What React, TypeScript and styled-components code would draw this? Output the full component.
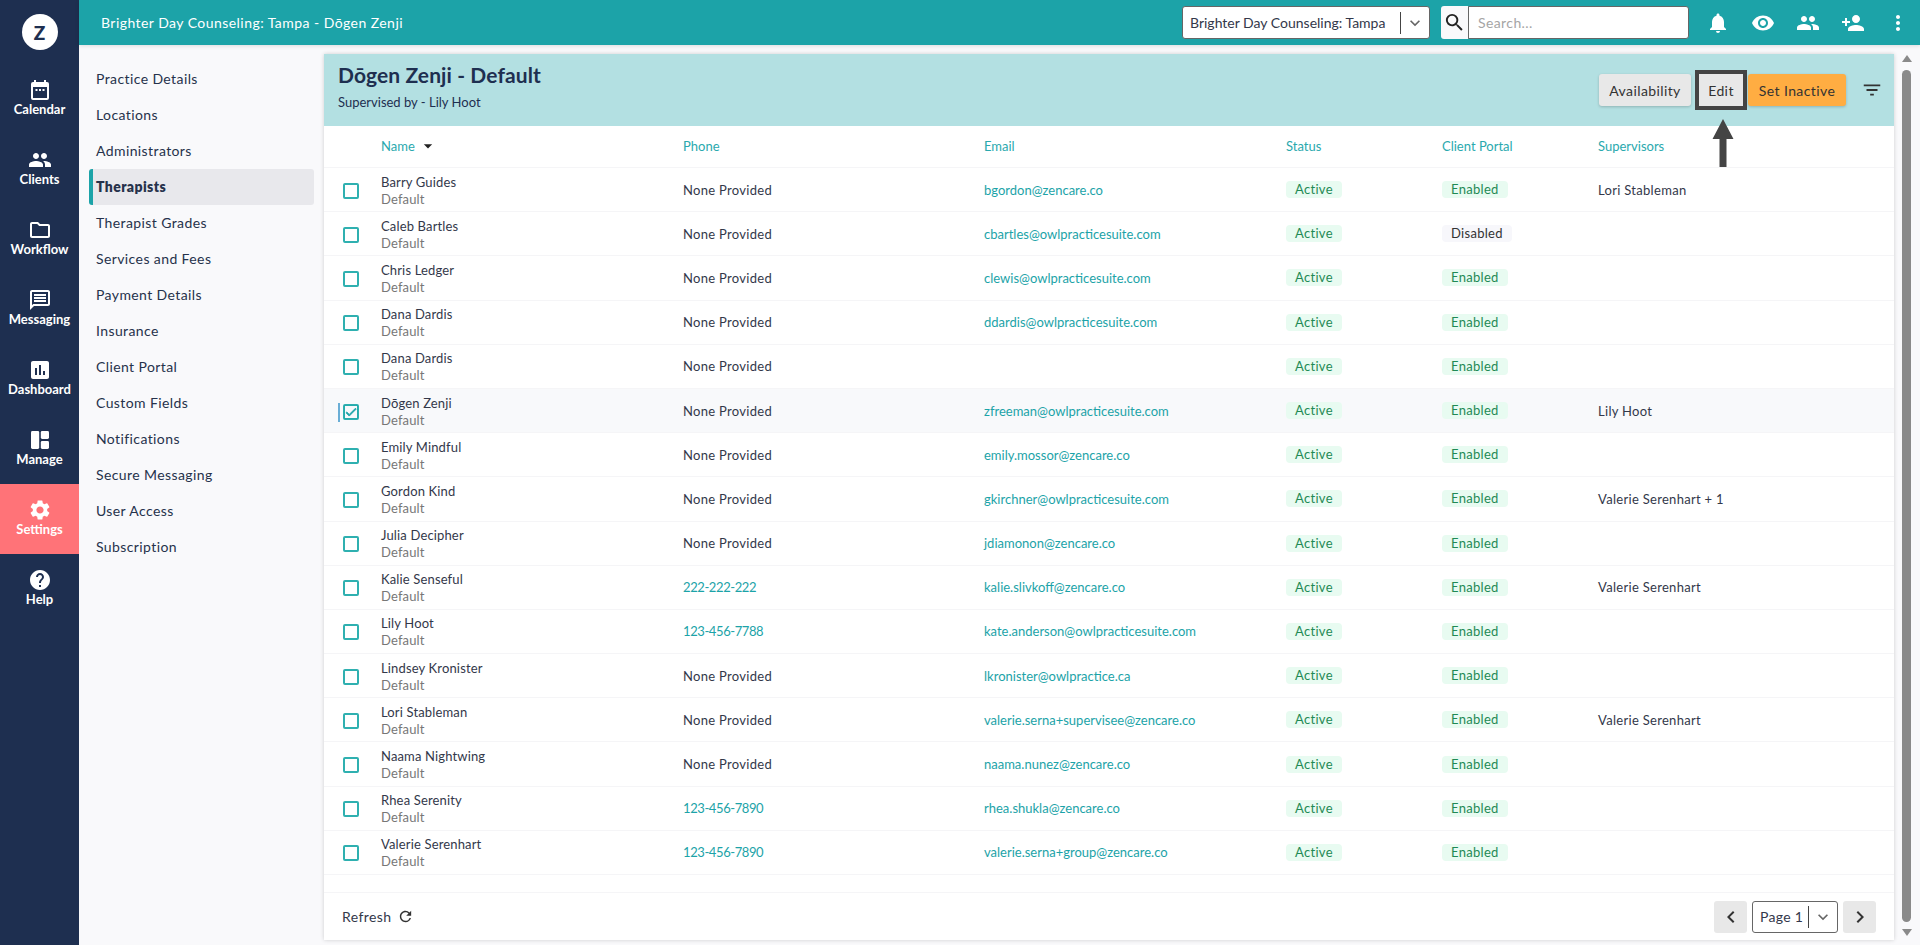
import React from "react";
import styled, { createGlobalStyle } from "styled-components";
import {
  MdPeople, MdOutlineFolder, MdOutlineMessage, MdAssessment, MdSettings, MdHelp,
  MdNotifications, MdVisibility, MdPersonAdd, MdMoreVert, MdSearch, MdFilterList,
  MdRefresh, MdChevronLeft, MdChevronRight, MdKeyboardArrowDown, MdArrowDropDown, MdCheck,
} from "react-icons/md";

const FONT = `"Lato", "Noto Sans", Arial, sans-serif`;

const Global = createGlobalStyle`
  html, body { margin: 0; padding: 0; height: 100%; overflow: hidden; background: #f9f9fb; }
  #root { height: 100%; }
  * { box-sizing: border-box; }
  body { font-family: ${FONT}; font-size: 14px; color: #33384a; }
`;

const Shell = styled.div`
  display: grid;
  grid-template-columns: 79px 1fr;
  height: 945px;
  width: 1920px;
`;

const Rail = styled.nav`
  background: #1e2f50;
  display: flex;
  flex-direction: column;
`;

const LogoBlock = styled.div`
  height: 64px;
  display: flex;
  justify-content: center;
  padding-top: 14px;
`;

const LogoCircle = styled.div`
  width: 36px;
  height: 36px;
  border-radius: 50%;
  background: #fff;
  color: #1e2f50;
  font-weight: 900;
  font-size: 19px;
  display: flex;
  align-items: center;
  justify-content: center;
`;

const RailItem = styled.div<{ $active?: boolean }>`
  height: 70px;
  background: ${(p) => (p.$active ? "#ff7378" : "transparent")};
  color: #fff;
  display: flex;
  flex-direction: column;
  align-items: center;
  padding-top: 14px;
  font-size: 13px;
  font-weight: 700;
  line-height: 18px;
  svg { display: block; width: 24px; height: 24px; margin-bottom: -2px; }
`;

const Main = styled.div`
  display: flex;
  flex-direction: column;
  min-width: 0;
`;

const TopBar = styled.header`
  height: 45px;
  flex: none;
  background: #1ca3a8;
  display: flex;
  align-items: center;
  padding-left: 22px;
  color: #fff;
  box-shadow: 0 1px 4px rgba(0, 0, 0, 0.12);
  position: relative;
  z-index: 2;
`;

const TopTitle = styled.div`
  font-size: 14px;
  letter-spacing: 0.45px;
  flex: 1;
`;

const PracticeSelect = styled.div`
  width: 248px;
  height: 33px;
  background: #fff;
  border: 1px solid #666;
  border-radius: 3px;
  color: #33384a;
  display: flex;
  align-items: center;
  padding-left: 7px;
  font-size: 14px;
  white-space: nowrap;
  margin-right: 11px;
`;

const SelectLabel = styled.span`
  flex: 1;
`;

const SelectCaret = styled.span`
  height: 22px;
  border-left: 1px solid #444;
  width: 29px;
  flex: none;
  display: flex;
  align-items: center;
  justify-content: center;
  color: #666;
  font-size: 20px;
`;

const SearchButton = styled.div`
  width: 27px;
  height: 33px;
  background: #f9f9fb;
  border-radius: 3px 0 0 3px;
  color: #222;
  display: flex;
  align-items: center;
  justify-content: center;
  font-size: 23px;
`;

const SearchInput = styled.input`
  width: 221px;
  height: 33px;
  border: 1px solid #666;
  border-radius: 0 3px 3px 0;
  background: #fff;
  padding: 0 9px;
  font: 14px ${FONT};
  letter-spacing: 0.4px;
  outline: none;
  margin-right: 6px;
  &::placeholder { color: #a5a5a5; opacity: 1; }
`;

const TopIcon = styled.div`
  width: 45px;
  height: 45px;
  display: flex;
  align-items: center;
  justify-content: center;
  font-size: 24px;
  color: #fff;
`;

const Body = styled.div`
  flex: 1;
  display: flex;
  min-height: 0;
`;

const SubNav = styled.aside`
  width: 245px;
  flex: none;
  padding: 16px 10px 0 10px;
`;

const SubNavItem = styled.div<{ $active?: boolean }>`
  height: 36px;
  display: flex;
  align-items: center;
  padding: 0 0 2px ${(p) => (p.$active ? "3px" : "7px")};
  border-left: ${(p) => (p.$active ? "4px solid #1ca3a8" : "0")};
  border-radius: 3px;
  background: ${(p) => (p.$active ? "#e8e8ec" : "transparent")};
  font-weight: ${(p) => (p.$active ? 800 : 400)};
  font-size: 14px;
  letter-spacing: 0.4px;
  color: #26324b;
`;

const Panel = styled.section`
  width: 1570px;
  flex: none;
  margin: 9px 0 5px;
  background: #fff;
  display: flex;
  flex-direction: column;
  box-shadow: 0 0 4px rgba(0, 0, 0, 0.18);
`;

const PanelHead = styled.div`
  height: 72px;
  flex: none;
  background: #b3e0e2;
  display: flex;
  align-items: center;
  padding: 0 14px;
  position: relative;
`;

const HeadText = styled.div`
  flex: 1;
  display: flex;
  flex-direction: column;
  color: #1e2f50;
  padding-bottom: 7px;
`;

const Title = styled.h1`
  margin: -1px 0 6px;
  font-size: 21px;
  line-height: 26px;
  font-weight: 700;
  letter-spacing: 0.1px;
`;

const Sub = styled.div`
  font-size: 13px;
  line-height: 16px;
  letter-spacing: 0;
`;

const ActionButton = styled.div<{ $tone?: "grey" | "orange"; $ringed?: boolean; $width: number }>`
  height: 32px;
  width: ${(p) => p.$width}px;
  display: flex;
  align-items: center;
  justify-content: center;
  font-size: 14px;
  letter-spacing: 0.4px;
  color: #333;
  border-radius: ${(p) => (p.$ringed ? "0" : "3px")};
  background: ${(p) => (p.$tone === "orange" ? "#ffad42" : "#e8e8e8")};
  box-shadow: ${(p) => (p.$ringed ? "none" : "0 1px 3px rgba(0,0,0,.2)")};
  outline: ${(p) => (p.$ringed ? "4px solid #444" : "none")};
  margin-left: ${(p) => (p.$ringed ? "8px" : p.$tone === "orange" ? "5px" : "0")};
`;

const FilterIcon = styled.div`
  margin-left: 15px;
  margin-right: -3px;
  color: #333;
  font-size: 22px;
  display: flex;
`;

const Arrow = styled.svg`
  position: absolute;
  left: 1388px;
  top: 65px;
  z-index: 3;
`;

const Columns = styled.div`
  display: grid;
  grid-template-columns: 57px 302px 301px 302px 156px 156px 1fr;
  align-items: center;
`;

const HeadRow = styled(Columns)`
  height: 42px;
  flex: none;
  padding-bottom: 1px;
  border-bottom: 1px solid #f5f5f7;
  color: #2aa9ae;
  font-size: 13px;
  letter-spacing: 0;
`;

const SortCell = styled.div`
  display: flex;
  align-items: center;
  gap: 3px;
  svg { color: #222; font-size: 20px; }
`;

const Row = styled(Columns)<{ $selected?: boolean }>`
  height: 44.19px;
  flex: none;
  border-bottom: 1px solid #f5f5f7;
  background: ${(p) => (p.$selected ? "#f8f9fb" : "#fff")};
  font-size: 13px;
  letter-spacing: 0.3px;
  color: #33384a;
`;

const Check = styled.div<{ $on?: boolean }>`
  width: 16px;
  height: 16px;
  margin: 2px 0 0 19px;
  border: 2px solid #2fb0b0;
  border-radius: 2px;
  position: relative;
  color: #1ca3a8;
  display: flex;
  align-items: center;
  justify-content: center;
  font-size: 14px;
  svg { stroke: currentColor; stroke-width: 1.5; flex: none; }
  &::before {
    content: "";
    display: ${(p) => (p.$on ? "block" : "none")};
    position: absolute;
    left: -7px;
    top: -3px;
    width: 2px;
    height: 19px;
    background: #6aaed6;
  }
`;

const NameCell = styled.div`
  display: flex;
  flex-direction: column;
  line-height: 17px;
  margin-top: 2px;
  letter-spacing: 0.15px;
`;

const Sublabel = styled.span`
  color: #777;
`;

const EmailLink = styled.span`
  color: #1ca3a8;
  letter-spacing: 0;
`;

const PhoneLink = styled.span`
  color: #1ca3a8;
  letter-spacing: -0.4px;
`;

const Badge = styled.span<{ $off?: boolean }>`
  display: inline-block;
  padding: 0 9px;
  height: 17px;
  line-height: 17px;
  border-radius: 4px;
  background: ${(p) => (p.$off ? "#f7f7fb" : "#e8fbf1")};
  color: ${(p) => (p.$off ? "#333" : "#1f8a55")};
`;

const Spacer = styled.div`
  height: 18px;
  flex: none;
  border-bottom: 1px solid #f5f5f7;
`;

const Footer = styled.div`
  flex: 1;
  display: flex;
  align-items: center;
  padding: 0 18px 0 18px;
`;

const RefreshLabel = styled.div`
  flex: 1;
  display: flex;
  align-items: center;
  gap: 6px;
  font-size: 14px;
  letter-spacing: 0.4px;
  color: #33384a;
  svg { font-size: 17px; color: #333; }
`;

const PageNav = styled.div`
  width: 33px;
  height: 32px;
  border-radius: 3px;
  background: #e8e8e8;
  color: #333;
  display: flex;
  align-items: center;
  justify-content: center;
  font-size: 24px;
`;

const PageSelect = styled.div`
  width: 86px;
  height: 32px;
  margin: 0 5px;
  border: 1px solid #666;
  border-radius: 3px;
  display: flex;
  align-items: center;
  padding-left: 7px;
  font-size: 14px;
  letter-spacing: 0.3px;
  color: #33384a;
`;

const Scroller = styled.div`
  flex: 1;
  display: flex;
  flex-direction: column;
  align-items: center;
  padding: 10px 0 9px 0;
  margin-left: -1px;
`;

const ScrollUp = styled.div`
  border-left: 5px solid transparent;
  border-right: 5px solid transparent;
  border-bottom: 7px solid #8a8a8a;
  margin-bottom: 8px;
`;

const ScrollThumb = styled.div`
  width: 9px;
  flex: 1;
  background: #8a8a8a;
  border-radius: 5px;
`;

const ScrollDown = styled.div`
  border-left: 5px solid transparent;
  border-right: 5px solid transparent;
  border-top: 7px solid #8a8a8a;
  margin-top: 7px;
`;

const CalendarIcon = () => (
  <svg viewBox="0 0 24 24" fill="currentColor">
    <path d="M19 4h-1V2h-2v2H8V2H6v2H5a2 2 0 0 0-2 2v14a2 2 0 0 0 2 2h14a2 2 0 0 0 2-2V6a2 2 0 0 0-2-2zm0 16H5V9h14v11z" />
    <rect x="7.5" y="11" width="2" height="2" />
    <rect x="11" y="11" width="2" height="2" />
    <rect x="14.5" y="11" width="2" height="2" />
  </svg>
);

const ManageIcon = () => (
  <svg viewBox="0 0 24 24" fill="currentColor">
    <rect x="3" y="3" width="8.2" height="18" rx="1.4" />
    <rect x="12.8" y="3" width="8.2" height="8" rx="1.4" />
    <rect x="12.8" y="13" width="8.2" height="8" rx="1.4" />
  </svg>
);

const railItems: { label: string; icon: React.ReactNode; active?: boolean }[] = [
  { label: "Calendar", icon: <CalendarIcon /> },
  { label: "Clients", icon: <MdPeople /> },
  { label: "Workflow", icon: <MdOutlineFolder /> },
  { label: "Messaging", icon: <MdOutlineMessage /> },
  { label: "Dashboard", icon: <MdAssessment /> },
  { label: "Manage", icon: <ManageIcon /> },
  { label: "Settings", icon: <MdSettings />, active: true },
  { label: "Help", icon: <MdHelp /> },
];

const subNav = [
  "Practice Details", "Locations", "Administrators", "Therapists", "Therapist Grades",
  "Services and Fees", "Payment Details", "Insurance", "Client Portal", "Custom Fields",
  "Notifications", "Secure Messaging", "User Access", "Subscription",
];

type Therapist = { name: string; phone?: string; email?: string; off?: boolean; sup?: string; selected?: boolean };

const therapists: Therapist[] = [
  { name: "Barry Guides", email: "bgordon@zencare.co", sup: "Lori Stableman" },
  { name: "Caleb Bartles", email: "cbartles@owlpracticesuite.com", off: true },
  { name: "Chris Ledger", email: "clewis@owlpracticesuite.com" },
  { name: "Dana Dardis", email: "ddardis@owlpracticesuite.com" },
  { name: "Dana Dardis" },
  { name: "Dōgen Zenji", email: "zfreeman@owlpracticesuite.com", sup: "Lily Hoot", selected: true },
  { name: "Emily Mindful", email: "emily.mossor@zencare.co" },
  { name: "Gordon Kind", email: "gkirchner@owlpracticesuite.com", sup: "Valerie Serenhart + 1" },
  { name: "Julia Decipher", email: "jdiamonon@zencare.co" },
  { name: "Kalie Senseful", phone: "222-222-222", email: "kalie.slivkoff@zencare.co", sup: "Valerie Serenhart" },
  { name: "Lily Hoot", phone: "123-456-7788", email: "kate.anderson@owlpracticesuite.com" },
  { name: "Lindsey Kronister", email: "lkronister@owlpractice.ca" },
  { name: "Lori Stableman", email: "valerie.serna+supervisee@zencare.co", sup: "Valerie Serenhart" },
  { name: "Naama Nightwing", email: "naama.nunez@zencare.co" },
  { name: "Rhea Serenity", phone: "123-456-7890", email: "rhea.shukla@zencare.co" },
  { name: "Valerie Serenhart", phone: "123-456-7890", email: "valerie.serna+group@zencare.co" },
];

export default function App() {
  return (
    <>
      <Global />
      <Shell>
        <Rail>
          <LogoBlock>
            <LogoCircle>Z</LogoCircle>
          </LogoBlock>
          {railItems.map((item) => (
            <RailItem key={item.label} $active={item.active}>
              {item.icon}
              <span>{item.label}</span>
            </RailItem>
          ))}
        </Rail>
        <Main>
          <TopBar>
            <TopTitle>Brighter Day Counseling: Tampa - Dōgen Zenji</TopTitle>
            <PracticeSelect>
              <SelectLabel>Brighter Day Counseling: Tampa</SelectLabel>
              <SelectCaret><MdKeyboardArrowDown /></SelectCaret>
            </PracticeSelect>
            <SearchButton><MdSearch /></SearchButton>
            <SearchInput placeholder="Search..." />
            <TopIcon><MdNotifications /></TopIcon>
            <TopIcon><MdVisibility /></TopIcon>
            <TopIcon><MdPeople /></TopIcon>
            <TopIcon><MdPersonAdd /></TopIcon>
            <TopIcon><MdMoreVert /></TopIcon>
          </TopBar>
          <Body>
            <SubNav>
              {subNav.map((label) => (
                <SubNavItem key={label} $active={label === "Therapists"}>{label}</SubNavItem>
              ))}
            </SubNav>
            <Panel>
              <PanelHead>
                <HeadText>
                  <Title>Dōgen Zenji - Default</Title>
                  <Sub>Supervised by - Lily Hoot</Sub>
                </HeadText>
                <ActionButton $tone="grey" $width={92}>Availability</ActionButton>
                <ActionButton $tone="grey" $ringed $width={44}>Edit</ActionButton>
                <ActionButton $tone="orange" $width={98}>Set Inactive</ActionButton>
                <FilterIcon><MdFilterList /></FilterIcon>
                <Arrow width="22" height="48" viewBox="0 0 22 48">
                  <path d="M11 0 L21.5 20 L14.5 20 L14.5 48 L7.5 48 L7.5 20 L0.5 20 Z" fill="#444" />
                </Arrow>
              </PanelHead>
              <HeadRow>
                <span />
                <SortCell>Name <MdArrowDropDown /></SortCell>
                <span>Phone</span>
                <span>Email</span>
                <span>Status</span>
                <span>Client Portal</span>
                <span>Supervisors</span>
              </HeadRow>
              {therapists.map((t, i) => (
                <Row key={i} $selected={t.selected}>
                  <Check $on={t.selected}>{t.selected && <MdCheck />}</Check>
                  <NameCell>
                    <span>{t.name}</span>
                    <Sublabel>Default</Sublabel>
                  </NameCell>
                  {t.phone ? <PhoneLink>{t.phone}</PhoneLink> : <span>None Provided</span>}
                  <EmailLink>{t.email ?? ""}</EmailLink>
                  <div><Badge>Active</Badge></div>
                  <div><Badge $off={t.off}>{t.off ? "Disabled" : "Enabled"}</Badge></div>
                  <span>{t.sup ?? ""}</span>
                </Row>
              ))}
              <Spacer />
              <Footer>
                <RefreshLabel>Refresh <MdRefresh /></RefreshLabel>
                <PageNav><MdChevronLeft /></PageNav>
                <PageSelect>
                  <SelectLabel>Page 1</SelectLabel>
                  <SelectCaret><MdKeyboardArrowDown /></SelectCaret>
                </PageSelect>
                <PageNav><MdChevronRight /></PageNav>
              </Footer>
            </Panel>
            <Scroller>
              <ScrollUp />
              <ScrollThumb />
              <ScrollDown />
            </Scroller>
          </Body>
        </Main>
      </Shell>
    </>
  );
}
